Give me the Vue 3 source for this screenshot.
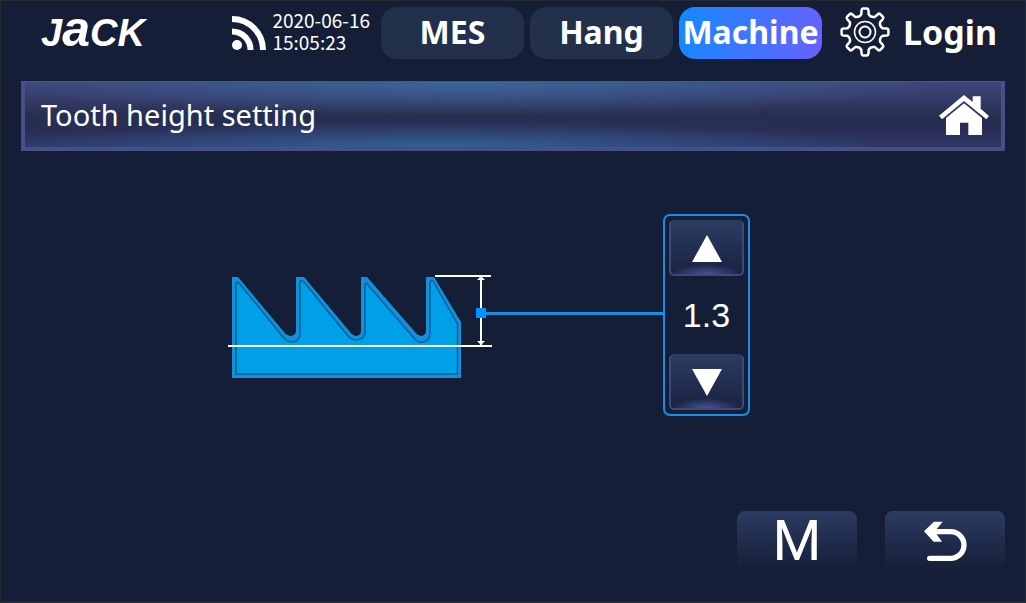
<script setup>
import { ref, computed } from 'vue'

const tabs = ['MES', 'Hang', 'Machine']
const active = ref('Machine')
const height = ref(1.3)
const shown = computed(() => height.value.toFixed(1))

function step(delta) {
  height.value = Math.max(0, Math.round((height.value + delta) * 10) / 10)
}

// Eight rounded teeth around the centre, joined by curved valleys.
function gearPath() {
  const at = (r, deg) => {
    const a = ((deg - 90) * Math.PI) / 180
    return `${(r * Math.cos(a)).toFixed(2)},${(r * Math.sin(a)).toFixed(2)}`
  }
  let d = ''
  for (let k = 0; k < 8; k++) {
    const c = k * 45
    d += `${k ? 'L' : 'M'}${at(18, c - 12)} L${at(22, c - 9)} Q${at(23.5, c - 8)} ${at(23.5, c - 5)} `
    d += `L${at(23.5, c + 5)} Q${at(23.5, c + 8)} ${at(22, c + 9)} L${at(18, c + 12)} `
    d += `Q${at(15.5, c + 22.5)} ${at(18, c + 33)} `
  }
  return d + 'Z'
}
const gear = gearPath()
</script>

<template>
  <div class="screen">
    <header class="top">
      <span class="logo">J<span class="tall">a</span>CK</span>
      <svg class="signal" viewBox="0 0 34 34" aria-hidden="true">
        <circle cx="5" cy="29" r="5" fill="#fff" />
        <path d="M0 15.500A18.500 18.500 0 0 1 18.500 34M0 3A31 31 0 0 1 31 34" fill="none" stroke="#fff" stroke-width="6" />
      </svg>
      <time class="clock" datetime="2020-06-16T15:05:23">2020-06-16<br />15:05:23</time>
      <nav class="tabs">
        <button
          v-for="tab in tabs"
          :key="tab"
          type="button"
          class="tab"
          :class="{ active: tab === active }"
          @click="active = tab"
        >{{ tab }}</button>
      </nav>
      <button type="button" class="login">
        <svg class="gear" viewBox="-25 -25 50 50" fill="none" stroke="#fff" aria-hidden="true">
          <path :d="gear" stroke-width="2.500" stroke-linejoin="round" />
          <circle r="10.500" stroke-width="1.500" />
          <circle r="5.500" stroke-width="2" />
        </svg>
        <span>Login</span>
      </button>
    </header>

    <section class="title-bar">
      <h1>Tooth height setting</h1>
      <button type="button" class="home" aria-label="Home">
        <svg viewBox="237 78 150 120" fill="#fff" aria-hidden="true">
          <path d="M237 140 312 78 338 99V82H362V119L387 141 379 151 312 96 246 151Z" />
          <path d="M312 103 366 147V198H325V161H300V198H258V147Z" />
        </svg>
      </button>
    </section>

    <main class="stage">
      <svg class="diagram" viewBox="228 214 435 202" role="img" aria-label="Tooth height">
        <path
          fill="#1490d8"
          d="M232 277H238L284 332C287 337 296 338 296 330V277H304L350 332C353 337 361 338 361 330V277H367L415 332C418 337 426 338 426 330V277H434L461 322V378H232Z"
        />
        <path
          fill="#00a0e9"
          stroke="#075f9c"
          stroke-width="1.500"
          d="M236 284Q236 281 239 283L283 337C288 344 300 344 300 333V283Q300 279 304 282L348 336C353 342 365 341 365 332V285Q365 281 368 285L413 337C418 345 430 344 430 333V284Q430 279 433 281L457.500 324V374H236Z"
        />
        <g fill="#fff">
          <rect x="435" y="275" width="56" height="2" />
          <rect x="228" y="345" width="264" height="2" />
          <rect x="480" y="276" width="2" height="70" />
          <path d="M481 276 485 280H477ZM481 345 485 341H477Z" />
        </g>
        <rect x="481" y="312" width="182" height="3" fill="#1a8ee6" />
        <rect x="476" y="308" width="10" height="10" fill="#0094ff" />
      </svg>

      <div class="stepper">
        <button type="button" aria-label="Increase" @click="step(0.1)">
          <svg viewBox="0 0 30 27" aria-hidden="true"><path d="M15 0 30 27H0Z" fill="#fff" /></svg>
        </button>
        <output>{{ shown }}</output>
        <button type="button" aria-label="Decrease" @click="step(-0.1)">
          <svg viewBox="0 0 30 27" aria-hidden="true"><path d="M0 0H30L15 27Z" fill="#fff" /></svg>
        </button>
      </div>
    </main>

    <footer class="actions">
      <button type="button" class="action">M</button>
      <button type="button" class="action" aria-label="Back">
        <svg viewBox="611 64 129 123" aria-hidden="true">
          <path d="M611 95 641 66H667L649 88V104L665 126H640Z" fill="#fff" />
          <path d="M638 96H691A40 40 0 0 1 691 176H628" fill="none" stroke="#fff" stroke-width="16" stroke-linecap="round" />
        </svg>
      </button>
    </footer>
  </div>
</template>

<style>
body {
  margin: 0;
  background: #141e36;
}
</style>

<style scoped>
.screen {
  box-sizing: border-box;
  min-height: 100vh;
  display: flex;
  flex-direction: column;
  border: 1px solid #26292f;
  border-bottom-width: 2px;
  background: #141e36;
  color: #fff;
  font-family: "Noto Sans", "Open Sans", sans-serif;
}

button {
  margin: 0;
  padding: 0;
  border: 0;
  background: none;
  color: inherit;
  font: inherit;
  cursor: pointer;
}

svg {
  display: block;
  flex: none;
}

.top {
  display: flex;
  align-items: center;
  padding: 6px 28px 0 40px;
}

.logo {
  padding-bottom: 4px;
  font: italic bold 38px/44px "Liberation Sans", Arial, sans-serif;
}

.tall {
  font-size: 50px;
  line-height: 44px;
}

.signal {
  width: 34px;
  height: 34px;
  margin-left: auto;
}

.clock {
  margin-left: 6px;
  padding-bottom: 4px;
  font: 19px/22px "Noto Sans CJK SC", sans-serif;
}

.tabs {
  display: flex;
  gap: 6px;
  margin-left: 11px;
}

.tab {
  width: 143px;
  height: 52px;
  padding-bottom: 2px;
  border-radius: 16px;
  background: #23304b;
  font-size: 32px;
  font-weight: 700;
  line-height: 50px;
}

.tab.active {
  background: linear-gradient(100deg, #1389ff, #6a60fc);
}

.login {
  display: flex;
  align-items: center;
  gap: 13px;
  margin-left: 18px;
  padding-bottom: 2px;
  font-size: 34px;
  font-weight: 700;
  line-height: 50px;
}

.gear {
  width: 50px;
  height: 50px;
}

.title-bar {
  display: flex;
  align-items: center;
  justify-content: space-between;
  box-sizing: border-box;
  height: 70px;
  margin: 22px 20px 0;
  padding: 0 12px 0 16px;
  border: 4px solid #464f88;
  border-top: 1px solid #405a86;
  background:
    radial-gradient(ellipse 50% 50% at 45% 0, #3c6ca0cc, #3c6ca000),
    radial-gradient(ellipse 45% 40% at 42% 100%, #3469a0cc, #3469a000),
    linear-gradient(#3d477b, #343965 30%, #24304f 52%, #2b2d57 75%, #2e3a68);
}

.title-bar h1 {
  margin: 0;
  font-size: 29px;
  font-weight: 400;
  line-height: 40px;
}

.home svg {
  width: 50px;
  height: 40px;
}

.stage {
  display: flex;
  justify-content: center;
  margin-top: 63px;
  padding-right: 48px;
}

.diagram {
  width: 435px;
  height: 202px;
}

.stepper {
  display: flex;
  flex-direction: column;
  justify-content: space-between;
  box-sizing: border-box;
  width: 87px;
  padding: 4px;
  border: 2px solid #1a8ee6;
  border-radius: 7px;
}

.stepper button {
  display: grid;
  place-items: center;
  box-sizing: border-box;
  height: 56px;
  border: 2px solid #404879;
  border-top-color: #2e3b61;
  border-radius: 5px;
  background:
    radial-gradient(ellipse 50% 18% at 50% 100%, #465398, #46539800),
    linear-gradient(#2c3b61, #192341);
}

.stepper svg {
  width: 30px;
  height: 27px;
}

.stepper output {
  font: 34px/40px "Liberation Sans", Arial, sans-serif;
  text-align: center;
}

.actions {
  display: flex;
  justify-content: flex-end;
  gap: 28px;
  margin-top: auto;
  padding: 24px 20px 30px;
}

.action {
  display: grid;
  place-items: center;
  width: 120px;
  height: 60px;
  border-radius: 8px;
  background: linear-gradient(#2c3b62, #141e36);
  font: 56px/60px Roboto, sans-serif;
}

.action svg {
  width: 43px;
  height: 41px;
}
</style>
